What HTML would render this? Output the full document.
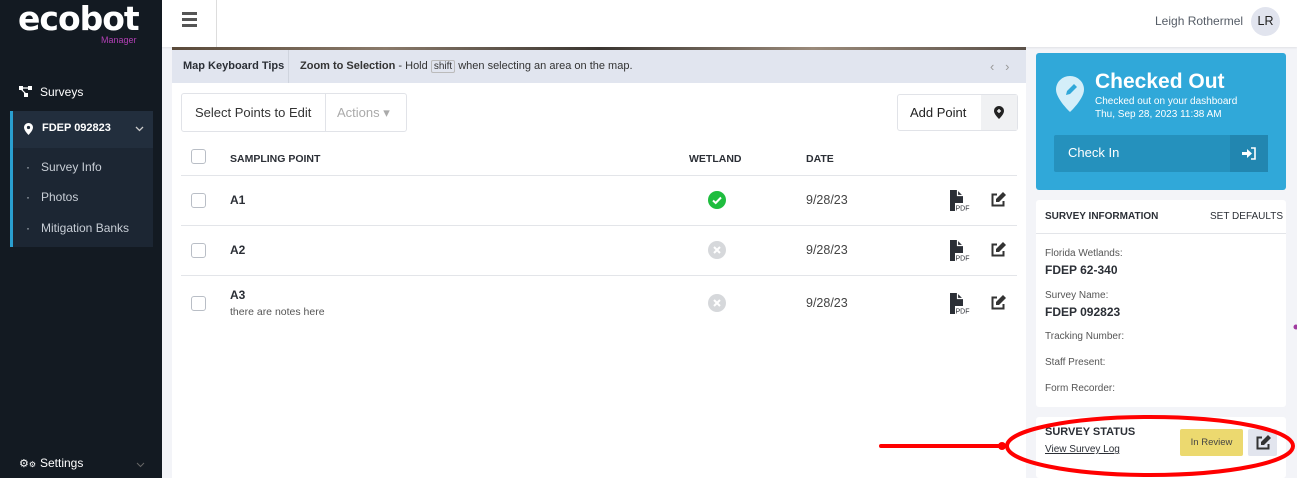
<!DOCTYPE html>
<html><head><meta charset="utf-8"><style>
*{box-sizing:border-box;margin:0;padding:0}
body{width:1297px;height:478px;overflow:hidden;background:#f3f4f8;font-family:"Liberation Sans",sans-serif;color:#2b2f36;position:relative;font-size:13px}
.abs{position:absolute}
.sb{left:0;top:0;width:162px;height:478px;background:#131a22;color:#e8ebef}
.hdr{left:162px;top:0;width:1135px;height:47px;background:#fff;box-shadow:0 1px 2px rgba(0,0,0,.08)}
.cb{width:15px;height:15px;border:1.5px solid #b9bec6;border-radius:3px;background:#fff}
.row{left:181px;width:836px;border-bottom:1px solid #e3e5e9}
.b{font-weight:bold}
</style></head><body>
<div class="abs sb">
  <div class="abs" style="left:18px;top:-1px;font-size:33px;color:#fff;font-family:'DejaVu Sans',sans-serif;font-weight:bold;letter-spacing:-1px">ecobot</div>
  <div class="abs" style="left:101px;top:35px;font-size:9px;color:#b13fb4">Manager</div>
  <svg class="abs" style="left:19px;top:86px" width="14" height="12" viewBox="0 0 14 12"><rect x="0" y="0" width="4" height="4" fill="#fff"/><rect x="9" y="0" width="4" height="4" fill="#fff"/><rect x="5" y="7" width="4" height="4" fill="#fff"/><path d="M3 2h7M2 3l5 5" stroke="#fff" stroke-width="1.2"/></svg>
  <div class="abs" style="left:40px;top:85px;font-size:12px;color:#fff">Surveys</div>
  <div class="abs" style="left:10px;top:111px;width:143px;height:136px;background:#1c2633;border-left:3px solid #2a9fd0"></div>
  <div class="abs" style="left:13px;top:111px;width:140px;height:37px;background:#222e3d"></div>
  <svg class="abs" style="left:24px;top:123px" width="9" height="12" viewBox="0 0 9 12"><path d="M4.5 0C2 0 0 2 0 4.5 0 7.5 4.5 12 4.5 12S9 7.5 9 4.5C9 2 7 0 4.5 0z" fill="#fff"/><circle cx="4.5" cy="4.5" r="1.6" fill="#222e3d"/></svg>
  <div class="abs b" style="left:42px;top:122px;font-size:11px;color:#fff">FDEP 092823</div>
  <svg class="abs" style="left:135px;top:126px" width="9" height="6"><path d="M1 1l3.5 3.5L8 1" stroke="#ccc" stroke-width="1.3" fill="none"/></svg>
  <div class="abs" style="left:26px;top:160px;font-size:12px;color:#c8ced6">·</div>
  <div class="abs" style="left:41px;top:160px;font-size:12px;color:#c8ced6">Survey Info</div>
  <div class="abs" style="left:26px;top:190px;font-size:12px;color:#c8ced6">·</div>
  <div class="abs" style="left:41px;top:190px;font-size:12px;color:#c8ced6">Photos</div>
  <div class="abs" style="left:26px;top:221px;font-size:12px;color:#c8ced6">·</div>
  <div class="abs" style="left:41px;top:221px;font-size:12px;color:#c8ced6">Mitigation Banks</div>
  <div class="abs" style="left:19px;top:457px;font-size:11px;color:#fff">⚙<span style="font-size:8px">⚙</span></div>
  <div class="abs" style="left:40px;top:456px;font-size:12px;color:#fff">Settings</div>
  <svg class="abs" style="left:136px;top:462px" width="9" height="6"><path d="M1 1l3.5 3.5L8 1" stroke="#666" stroke-width="1" fill="none"/></svg>
</div>
<div class="abs hdr">
  <div class="abs" style="left:20px;top:12px;width:15px;height:2.5px;background:#555;box-shadow:0 6px 0 #555,0 12px 0 #555"></div>
  <div class="abs" style="left:54px;top:0;width:1px;height:47px;background:#ddd"></div>
  <div class="abs" style="left:993px;top:14px;font-size:12px;color:#555c66">Leigh Rothermel</div>
  <div class="abs" style="left:1089px;top:7px;width:29px;height:29px;border-radius:50%;background:#e1e4ee;font-size:12.5px;text-align:center;line-height:29px;color:#222">LR</div>
</div>
<div class="abs" style="left:172px;top:47px;width:854px;height:3px;background:linear-gradient(90deg,#5a4a3a,#8a7a6a,#3a3530,#9a8a7a,#5a5048)"></div>
<div class="abs" style="left:172px;top:50px;width:854px;height:33px;background:#e1e5ef;font-size:11px;line-height:33px">
  <span class="abs b" style="left:11px">Map Keyboard Tips</span>
  <div class="abs" style="left:116px;top:0;width:1px;height:33px;background:#cfd4de"></div>
  <span class="abs" style="left:128px;color:#333"><b>Zoom to Selection</b> - Hold <span style="border:1px solid #bbb;border-radius:2px;padding:0 2px;font-size:10px">shift</span> when selecting an area on the map.</span>
  <span class="abs" style="left:818px;color:#999;font-size:13px">‹&nbsp;&nbsp;&nbsp;›</span>
</div>
<div class="abs" style="left:172px;top:83px;width:854px;height:395px;background:#fff"></div>
<div class="abs" style="left:181px;top:93px;width:226px;height:39px;border:1px solid #e1e3e8;border-radius:3px;background:#fff"></div>
<div class="abs" style="left:325px;top:93px;width:1px;height:39px;background:#e1e3e8"></div>
<div class="abs" style="left:195px;top:105px;font-size:13px;color:#333">Select Points to Edit</div>
<div class="abs" style="left:337px;top:105px;font-size:13px;color:#aaa">Actions ▾</div>
<div class="abs" style="left:897px;top:94px;width:121px;height:37px;border:1px solid #e1e3e8;border-radius:3px;background:#fff"></div>
<div class="abs" style="left:981px;top:95px;width:36px;height:35px;background:#f0f1f3"></div>
<div class="abs" style="left:910px;top:105px;font-size:13px;color:#222">Add Point</div>
<svg class="abs" style="left:994px;top:106px" width="10" height="13" viewBox="0 0 10 13"><path d="M5 0C2.2 0 0 2.2 0 5c0 3.3 5 8 5 8s5-4.7 5-8C10 2.2 7.8 0 5 0z" fill="#222"/><path d="M5 3v4M3 5h4" stroke="#fff" stroke-width="1.3"/></svg>
<div class="abs row" style="top:141px;height:35px"></div>
<div class="abs cb" style="left:191px;top:149px"></div>
<div class="abs b" style="left:230px;top:153px;font-size:10.5px">SAMPLING POINT</div>
<div class="abs b" style="left:689px;top:153px;font-size:10.5px">WETLAND</div>
<div class="abs b" style="left:806px;top:153px;font-size:10.5px">DATE</div>

<div class="abs row" style="top:176px;height:50px"></div>
<div class="abs cb" style="left:191px;top:193px"></div>
<div class="abs b" style="left:230px;top:193px;font-size:12px">A1</div>
<div class="abs" style="left:708px;top:191px;width:18px;height:18px;border-radius:50%;background:#1fbd3f"><svg width="18" height="18"><path d="M5 9.5l2.7 2.5L13 6.5" stroke="#fff" stroke-width="2" fill="none"/></svg></div>
<div class="abs" style="left:806px;top:193px;font-size:12.5px;color:#444">9/28/23</div>

<div class="abs row" style="top:226px;height:50px"></div>
<div class="abs cb" style="left:191px;top:243px"></div>
<div class="abs b" style="left:230px;top:243px;font-size:12px">A2</div>
<div class="abs" style="left:708px;top:241px;width:18px;height:18px;border-radius:50%;background:#d6d8db"><svg width="18" height="18"><path d="M6 6l6 6M12 6l-6 6" stroke="#fff" stroke-width="2"/></svg></div>
<div class="abs" style="left:806px;top:243px;font-size:12.5px;color:#444">9/28/23</div>

<div class="abs cb" style="left:191px;top:296px"></div>
<div class="abs b" style="left:230px;top:288px;font-size:12px">A3</div>
<div class="abs" style="left:230px;top:306px;font-size:10.5px;color:#555">there are notes here</div>
<div class="abs" style="left:708px;top:294px;width:18px;height:18px;border-radius:50%;background:#d6d8db"><svg width="18" height="18"><path d="M6 6l6 6M12 6l-6 6" stroke="#fff" stroke-width="2"/></svg></div>
<div class="abs" style="left:806px;top:296px;font-size:12.5px;color:#444">9/28/23</div>

<svg class="abs" style="left:948px;top:190px" width="24" height="22" viewBox="0 0 24 22"><path d="M2 0h7l6 6v15H2z" fill="#2b2f36"/><path d="M9.5 0v5.5H15" stroke="#fff" stroke-width="1.2" fill="none"/><rect x="7" y="13" width="15" height="8" fill="#fff"/><text x="7.5" y="20.5" font-size="7" font-family="Liberation Sans" fill="#2b2f36">PDF</text></svg>
<svg class="abs" style="left:948px;top:240px" width="24" height="22" viewBox="0 0 24 22"><path d="M2 0h7l6 6v15H2z" fill="#2b2f36"/><path d="M9.5 0v5.5H15" stroke="#fff" stroke-width="1.2" fill="none"/><rect x="7" y="13" width="15" height="8" fill="#fff"/><text x="7.5" y="20.5" font-size="7" font-family="Liberation Sans" fill="#2b2f36">PDF</text></svg>
<svg class="abs" style="left:948px;top:293px" width="24" height="22" viewBox="0 0 24 22"><path d="M2 0h7l6 6v15H2z" fill="#2b2f36"/><path d="M9.5 0v5.5H15" stroke="#fff" stroke-width="1.2" fill="none"/><rect x="7" y="13" width="15" height="8" fill="#fff"/><text x="7.5" y="20.5" font-size="7" font-family="Liberation Sans" fill="#2b2f36">PDF</text></svg>
<svg class="abs" style="left:990px;top:192px" width="16" height="16" viewBox="0 0 16 16"><path d="M7 2.5H2.5v11h11V9" stroke="#333" stroke-width="2" fill="none"/><path d="M13 0l3 3-7 7H6V7z" fill="#333"/></svg>
<svg class="abs" style="left:990px;top:242px" width="16" height="16" viewBox="0 0 16 16"><path d="M7 2.5H2.5v11h11V9" stroke="#333" stroke-width="2" fill="none"/><path d="M13 0l3 3-7 7H6V7z" fill="#333"/></svg>
<svg class="abs" style="left:990px;top:295px" width="16" height="16" viewBox="0 0 16 16"><path d="M7 2.5H2.5v11h11V9" stroke="#333" stroke-width="2" fill="none"/><path d="M13 0l3 3-7 7H6V7z" fill="#333"/></svg>

<div class="abs" style="left:1036px;top:53px;width:250px;height:137px;background:#30a8d9;border-radius:3px;color:#fff">
  <svg class="abs" style="left:20px;top:23px" width="28" height="36" viewBox="0 0 28 36"><path d="M14 0C6.3 0 0 6 0 13.5 0 23 14 36 14 36s14-13 14-22.5C28 6 21.7 0 14 0z" fill="#d4eef9"/><path d="M10 19l1-4 7-7 3 3-7 7z" fill="#30a8d9"/></svg>
  <div class="abs b" style="left:59px;top:17px;font-size:21px">Checked Out</div>
  <div class="abs" style="left:59px;top:43px;font-size:10px">Checked out on your dashboard</div>
  <div class="abs" style="left:59px;top:56px;font-size:10px">Thu, Sep 28, 2023 11:38 AM</div>
  <div class="abs" style="left:18px;top:82px;width:214px;height:37px;background:#2591bd;border-radius:2px"></div>
  <div class="abs" style="left:194px;top:82px;width:38px;height:37px;background:#2286b0"></div>
  <div class="abs" style="left:32px;top:92px;font-size:13px">Check In</div>
  <svg class="abs" style="left:206px;top:94px" width="14" height="13" viewBox="0 0 14 13"><path d="M0 5h5V2l5 4.5-5 4.5V8H0z" fill="#fff"/><path d="M9 1h4v11H9" stroke="#fff" stroke-width="1.6" fill="none"/></svg>
</div>
<div class="abs" style="left:1036px;top:200px;width:250px;height:207px;background:#fff;border-radius:3px">
  <div class="abs b" style="left:9px;top:11px;font-size:10px">SURVEY INFORMATION</div>
  <div class="abs" style="left:174px;top:11px;font-size:10px">SET DEFAULTS</div>
  <div class="abs" style="left:0;top:33px;width:250px;height:1px;background:#e3e5e9"></div>
  <div class="abs" style="left:9px;top:48px;font-size:10px;color:#555">Florida Wetlands:</div>
  <div class="abs b" style="left:9px;top:63px;font-size:12px">FDEP 62-340</div>
  <div class="abs" style="left:9px;top:90px;font-size:10px;color:#555">Survey Name:</div>
  <div class="abs b" style="left:9px;top:105px;font-size:12px">FDEP 092823</div>
  <div class="abs" style="left:9px;top:131px;font-size:10px;color:#555">Tracking Number:</div>
  <div class="abs" style="left:9px;top:157px;font-size:10px;color:#555">Staff Present:</div>
  <div class="abs" style="left:9px;top:183px;font-size:10px;color:#555">Form Recorder:</div>
</div>
<div class="abs" style="left:1036px;top:417px;width:250px;height:61px;background:#fff;border-radius:3px">
  <div class="abs b" style="left:9px;top:9px;font-size:11px">SURVEY STATUS</div>
  <div class="abs" style="left:9px;top:27px;font-size:10px;text-decoration:underline">View Survey Log</div>
  <div class="abs" style="left:144px;top:12px;width:63px;height:27px;background:#ecd96f;border-radius:2px;font-size:9.5px;text-align:center;line-height:27px;color:#444">In Review</div>
  <div class="abs" style="left:212px;top:12px;width:29px;height:27px;background:#e2e5ee;border-radius:2px"></div>
  <svg class="abs" style="left:219px;top:18px" width="16" height="16" viewBox="0 0 16 16"><path d="M7 2.5H2.5v11h11V9" stroke="#333" stroke-width="2" fill="none"/><path d="M13 0l3 3-7 7H6V7z" fill="#333"/></svg>
</div>
<svg class="abs" style="left:0;top:0" width="1297" height="478">
  <ellipse cx="1150" cy="446" rx="143" ry="29" stroke="#f00" stroke-width="4" fill="none"/>
  <path d="M881 446H1003" stroke="#f00" stroke-width="4" stroke-linecap="round"/>
  <circle cx="1002" cy="446" r="4" fill="#f00"/>
  <circle cx="1296" cy="327" r="2.5" fill="#a03aa0"/>
</svg>
</body></html>
